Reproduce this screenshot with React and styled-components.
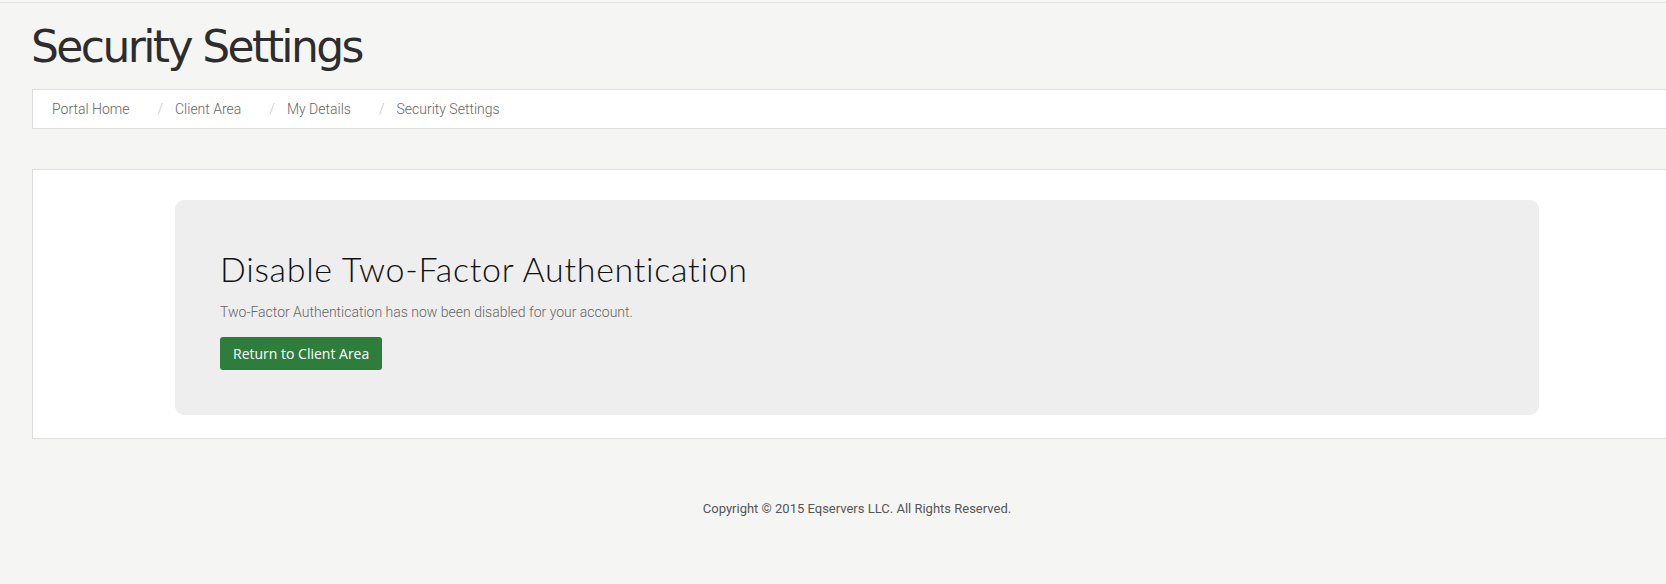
import React from "react";
import styled, { createGlobalStyle } from "styled-components";

const GlobalStyle = createGlobalStyle`
  html, body {
    margin: 0;
    padding: 0;
    overflow: hidden;
    background: #f5f6f4;
  }
  body {
    font-family: Roboto, "Liberation Sans", sans-serif;
  }
`;

const Page = styled.div`
  margin-top: 2px;
  border-top: 1px solid #e4e6e3;
  min-height: 581px;
  background: #f5f6f4;
`;

const Container = styled.div`
  width: 1650px;
  margin-left: 32px;
`;

const PageTitle = styled.h1`
  margin: 0 0 0 -1px;
  padding: 18px 0 0;
  height: 68px;
  font-family: "DejaVu Sans", sans-serif;
  font-weight: 400;
  font-size: 44px;
  line-height: 52px;
  letter-spacing: -2.6px;
  color: #2d2d2d;
`;

const Breadcrumb = styled.ol`
  display: flex;
  align-items: center;
  margin: 0;
  padding: 0 0 0 19px;
  height: 38px;
  list-style: none;
  background: #fff;
  border: 1px solid #dcdedb;
`;

const Crumb = styled.li`
  font-size: 14px;
  font-weight: 300;
  color: #666;

  & + &::before {
    content: "/";
    padding: 0 12px 0 28px;
    color: #c4c4c4;
  }
`;

const Panel = styled.section`
  margin-top: 40px;
  background: #fff;
  border: 1px solid #dcdedb;
  padding: 30px 0 23px;
  display: flex;
  justify-content: center;
`;

const Jumbotron = styled.div`
  width: 1364px;
  box-sizing: border-box;
  height: 215px;
  padding: 47px 45px 0;
  background: #eeeeee;
  border-radius: 9px;
`;

const Heading = styled.h2`
  margin: 0;
  font-family: Lato, sans-serif;
  font-weight: 300;
  font-size: 34px;
  line-height: 44px;
  letter-spacing: 0.7px;
  color: #111;
`;

const Lead = styled.p`
  margin: 11px 0 15px;
  font-size: 14px;
  font-weight: 300;
  line-height: 20px;
  color: #666;
`;

const Button = styled.a`
  display: inline-block;
  padding: 0 13px;
  height: 33px;
  line-height: 33px;
  border-radius: 3px;
  background: #2e7d3d;
  color: #fff;
  font-family: "Open Sans", sans-serif;
  font-size: 14px;
  text-decoration: none;
`;

const Footer = styled.footer`
  padding-top: 62px;
  text-align: center;
  font-size: 13px;
  color: #555;
`;

const App = () => {
  return (
    <Page>
      <GlobalStyle />
      <Container>
        <PageTitle>Security Settings</PageTitle>
        <Breadcrumb>
          <Crumb>Portal Home</Crumb>
          <Crumb>Client Area</Crumb>
          <Crumb>My Details</Crumb>
          <Crumb>Security Settings</Crumb>
        </Breadcrumb>
        <Panel>
          <Jumbotron>
            <Heading>Disable Two-Factor Authentication</Heading>
            <Lead>Two-Factor Authentication has now been disabled for your account.</Lead>
            <Button href="#">Return to Client Area</Button>
          </Jumbotron>
        </Panel>
        <Footer>Copyright © 2015 Eqservers LLC. All Rights Reserved.</Footer>
      </Container>
    </Page>
  );
};

export default App;
